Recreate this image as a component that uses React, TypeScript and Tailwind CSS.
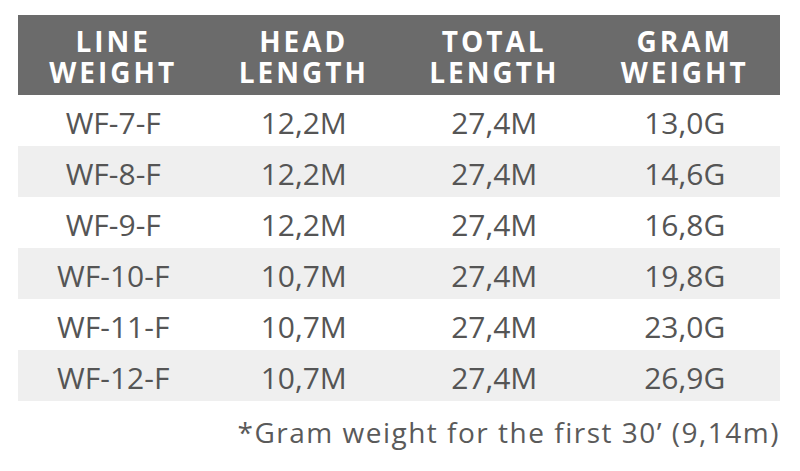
import React from "react";

const rows = [
  ["WF-7-F", "12,2M", "27,4M", "13,0G"],
  ["WF-8-F", "12,2M", "27,4M", "14,6G"],
  ["WF-9-F", "12,2M", "27,4M", "16,8G"],
  ["WF-10-F", "10,7M", "27,4M", "19,8G"],
  ["WF-11-F", "10,7M", "27,4M", "23,0G"],
  ["WF-12-F", "10,7M", "27,4M", "26,9G"],
];

const headers = [
  ["LINE", "WEIGHT"],
  ["HEAD", "LENGTH"],
  ["TOTAL", "LENGTH"],
  ["GRAM", "WEIGHT"],
];

export default function App() {
  return (
    <div
      className="w-[800px] h-[471px] bg-white pt-[15px] pl-[18px]"
      style={{ fontFamily: '"Open Sans", "Liberation Sans", sans-serif' }}
    >
      <div className="w-[762px]">
        <div className="grid grid-cols-4 h-[80px] bg-[#6b6b6b] items-center pt-[3px]">
          {headers.map((h, i) => (
            <div
              key={i}
              className="text-center text-white font-bold text-[28px] leading-[31px] tracking-[3px]"
            >
              <div>{h[0]}</div>
              <div>{h[1]}</div>
            </div>
          ))}
        </div>
        {rows.map((r, i) => (
          <div
            key={i}
            className={`grid grid-cols-4 h-[51px] items-center pt-[4px] ${i % 2 === 1 ? "bg-[#efefef]" : "bg-white"}`}
          >
            {r.map((c, j) => (
              <div key={j} className="text-center text-[#555555] text-[30px] leading-none">
                {c}
              </div>
            ))}
          </div>
        ))}
        <div className="mt-[14px] text-right text-[#5a5a5a] text-[28px] leading-[34px] tracking-[1.5px]">
          *Gram weight for the first 30’ (9,14m)
        </div>
      </div>
    </div>
  );
}
